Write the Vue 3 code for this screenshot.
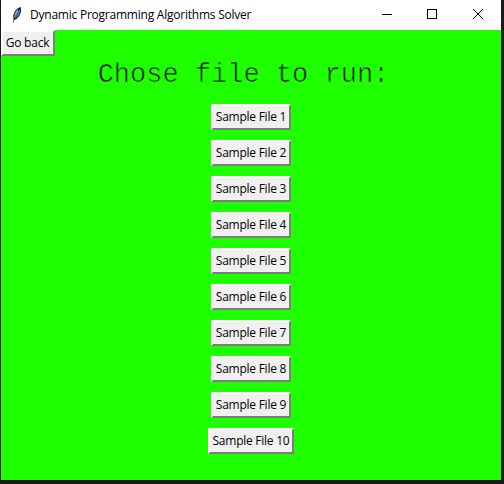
<script setup>
const files = Array.from({ length: 10 }, (_, i) => `Sample File ${i + 1}`)
</script>

<template>
  <div class="desktop">
    <main class="window">
      <header class="titlebar">
        <svg class="feather" width="12" height="18" viewBox="0 0 12 18">
          <path d="M2.6 13 L2.2 9.5 L4 5 L7 2 L10 1 L10 6 L8.3 10 L5.5 13 L3.5 14 Z" fill="#17202c" />
          <path d="M3.2 11 L4.5 6.5 L7 3.3 L7.2 6 L4.4 12 Z" fill="#a5cdf8" />
          <path d="M4.8 12 L7 6.5 L9.3 2.2 L9.1 6 L7.4 9.6 Z" fill="#3f83dc" />
          <path d="M2.2 16.6 L3.2 12.5 L7 5.5" fill="none" stroke="#20262e" stroke-width=".7" />
        </svg>
        <span class="title">Dynamic Programming Algorithms Solver</span>
        <svg class="controls" width="101" height="12" viewBox="0 0 101 12" fill="none" stroke="#000">
          <path d="M0 6.5 H10" />
          <rect x="45.5" y="1.5" width="9" height="9" />
          <path d="M91 1 L101 11 M101 1 L91 11" />
        </svg>
      </header>
      <section class="body">
        <button class="btn back">Go back</button>
        <h1>Chose file to run:</h1>
        <div class="list">
          <button v-for="(f, i) in files" :key="f" class="btn" :class="i === 9 ? 'wide' : 'file'">{{ f }}</button>
        </div>
      </section>
    </main>
  </div>
</template>

<style>
body { margin: 0; }
</style>

<style scoped>
.desktop {
  box-sizing: border-box;
  width: 504px;
  height: 484px;
  padding: 0 3px 4px 1px;
  background: #1b1919;
  overflow: hidden;
}
.window {
  display: flex;
  flex-direction: column;
  height: 480px;
  background: #1eff00;
}
.titlebar {
  display: flex;
  align-items: center;
  flex: none;
  height: 30px;
  box-sizing: border-box;
  padding: 0 18px 2px 10px;
  background: #fff;
}
.feather { margin-top: 1px; }
.title {
  margin-left: 7px;
  font: 12px/16px "Open Sans", "Noto Sans", sans-serif;
  letter-spacing: -0.23px;
  color: #000;
  white-space: nowrap;
  padding-top: 1px;
}
.controls { margin-left: auto; }
.body {
  display: flex;
  flex-direction: column;
  align-items: center;
}
.btn {
  box-sizing: border-box;
  height: 26px;
  margin: 0;
  padding: 0 0 1px;
  border: 2px solid;
  border-color: #fff #7d7d7d #7d7d7d #fff;
  border-radius: 0;
  background: #f0f0f0;
  color: #000;
  font: 12px/20px "Open Sans", "Noto Sans", sans-serif;
  letter-spacing: -0.25px;
  white-space: nowrap;
}
.back {
  align-self: flex-start;
  width: 54px;
  padding-right: 1px;
}
h1 {
  margin: 0 15px 0 0;
  height: 48px;
  font: 400 27px/39px "Liberation Mono", monospace;
  color: #000;
  -webkit-text-stroke: 0.7px #1eff00;
  white-space: pre;
}
.list {
  display: flex;
  flex-direction: column;
  align-items: center;
  gap: 10px;
}
.file { width: 80px; }
.wide { width: 86px; }
</style>
